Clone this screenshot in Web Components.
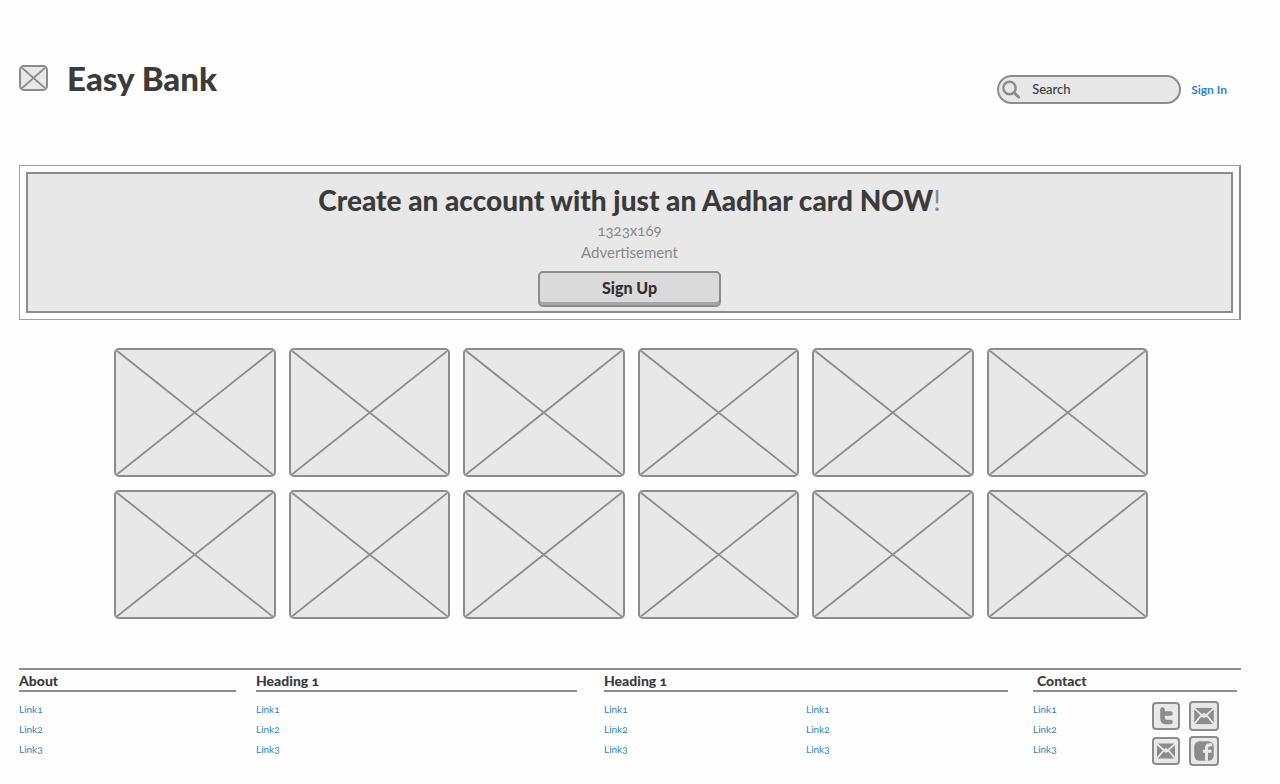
<!DOCTYPE html>
<html lang="en">
<head>
<meta charset="utf-8">
<meta name="viewport" content="width=device-width, initial-scale=1">
<title>Easy Bank</title>
<style>
  :root {
    --ink: #3b3b3b;
    --line: #8c8c8c;
    --fill: #e8e8e8;
    --muted: #8a8a8a;
    --link: #2b84c8;
  }
  * { box-sizing: border-box; }
  body {
    margin: 0;
    background: #fefefe;
    color: var(--ink);
    font-family: Lato, "Open Sans", sans-serif;
    font-variant-numeric: oldstyle-nums;
  }
</style>
</head>
<body>
<bank-page></bank-page>

<template id="bank-page">
  <style>
    :host { display: block; padding: 60px 39px 16px 19px; }
    .gallery { margin: 28px 93px 49px 95px; }
  </style>
  <site-header></site-header>
  <main>
    <promo-banner>
      <span slot="title">Create an account with just an Aadhar card NOW</span>
      <span slot="size">1323x169</span>
      <span slot="kind">Advertisement</span>
      <span slot="action">Sign Up</span>
    </promo-banner>
    <image-grid class="gallery" count="12"></image-grid>
  </main>
  <site-footer></site-footer>
</template>

<template id="image-box">
  <style>
    :host { display: block; }
    div { box-sizing: border-box; height: 100%; border: 2px solid var(--line); border-radius: 5px; background: var(--fill); overflow: hidden; }
    svg { display: block; width: 100%; height: 100%; }
    line { stroke: var(--line); stroke-width: 1.8; vector-effect: non-scaling-stroke; }
  </style>
  <div><svg viewBox="0 0 100 100" preserveAspectRatio="none" aria-hidden="true">
    <line x1="0" y1="0" x2="100" y2="100"/><line x1="100" y1="0" x2="0" y2="100"/>
  </svg></div>
</template>

<template id="site-header">
  <style>
    :host { display: block; }
    header { display: flex; align-items: flex-start; padding-right: 14px; height: 105px; box-sizing: border-box; }
    .brand { display: flex; align-items: center; gap: 19px; flex: 1; height: 36px; }
    image-box { width: 29px; height: 26px; }
    h1 { margin: 0; font-size: 33px; line-height: 36px; font-weight: 900; }
    .tools { display: flex; align-items: center; gap: 10px; padding-top: 15px; }
    a { color: var(--link); font-size: 12px; font-weight: 700; text-decoration: none; }
  </style>
  <header>
    <div class="brand"><image-box></image-box><h1>Easy Bank</h1></div>
    <div class="tools"><search-field></search-field><a href="#signin">Sign In</a></div>
  </header>
</template>

<template id="search-field">
  <style>
    :host { display: block; width: 184px; }
    label { display: flex; align-items: center; box-sizing: border-box; height: 29px; gap: 11px; padding: 0 12px 0 2px; border: 2px solid var(--line); border-radius: 15px; background: var(--fill); }
    svg { flex: none; }
    input { flex: 1; min-width: 0; padding: 0 0 2px; border: 0; outline: 0; background: none; color: var(--ink); font: inherit; font-size: 13px; font-weight: 500; }
    input::placeholder { color: var(--ink); opacity: 1; }
  </style>
  <label>
    <svg width="20" height="20" viewBox="0 0 20 20" fill="none" stroke="#8c8c8c" aria-hidden="true">
      <circle cx="8.500" cy="8" r="6.200" stroke-width="2.400"/><path d="M13 12.500 17.500 17" stroke-width="3" stroke-linecap="round"/>
    </svg>
    <input type="search" placeholder="Search" aria-label="Search">
  </label>
</template>

<template id="promo-banner">
  <style>
    :host { display: block; border: 1px solid #a0a0a0; border-right: 2px solid var(--line); padding: 6px; }
    section { display: flex; flex-direction: column; align-items: center; box-sizing: border-box; padding: 7px 16px 4px; border: 2px solid var(--line); background: var(--fill); text-align: center; }
    h2 { margin: 0; font-size: 28px; line-height: 38px; font-weight: 900; }
    i { font-style: normal; font-weight: 400; color: var(--muted); }
    p { margin: 0; font-size: 15px; line-height: 22px; color: var(--muted); }
    button { width: 183px; height: 36px; margin-top: 8px; padding: 0 0 3px; border: 2px solid var(--line); border-radius: 5px; background: #dadada; box-shadow: inset 0 -3px #a6a6a6; color: #303030; font: inherit; font-size: 16px; font-weight: 900; }
  </style>
  <section>
    <h2><slot name="title"></slot><i>!</i></h2>
    <p><slot name="size"></slot></p>
    <p><slot name="kind"></slot></p>
    <button type="button"><slot name="action"></slot></button>
  </section>
</template>

<template id="image-grid">
  <style>
    :host { display: grid; grid-template-columns: repeat(6, 1fr); gap: 13px; }
    image-box { aspect-ratio: 5 / 4; }
  </style>
</template>

<template id="site-footer">
  <style>
    :host { display: block; border-top: 2px solid var(--line); }
    footer { display: grid; grid-template-columns: 217fr 20fr 321fr 27fr 404fr 25fr 204fr 4fr; }
    footer-column:nth-child(1) { grid-column: 1; }
    footer-column:nth-child(2) { grid-column: 3; }
    footer-column:nth-child(3) { grid-column: 5; }
    footer-column:nth-child(4) { grid-column: 7; --indent: 4px; }
    .social { display: grid; grid-template-columns: 28px 30px; justify-content: end; align-items: center; gap: 5px 9px; padding: 2px 18px 0 0; }
  </style>
  <footer>
    <footer-column><span slot="heading">About</span><link-list></link-list></footer-column>
    <footer-column><span slot="heading">Heading 1</span><link-list></link-list></footer-column>
    <footer-column><span slot="heading">Heading 1</span><link-list></link-list><link-list></link-list></footer-column>
    <footer-column><span slot="heading">Contact</span><link-list></link-list>
      <div class="social">
        <social-icon kind="twitter" label="Twitter"></social-icon>
        <social-icon kind="mail" label="Email" large></social-icon>
        <social-icon kind="mail" label="Newsletter"></social-icon>
        <social-icon kind="facebook" label="Facebook" large></social-icon>
      </div>
    </footer-column>
  </footer>
</template>

<template id="footer-column">
  <style>
    :host { display: block; }
    h3 { margin: 0 0 7px; padding: 2px 0 0 var(--indent, 0); border-bottom: 2px solid var(--line); font-size: 14px; line-height: 18px; font-weight: 900; }
    .body { display: grid; grid-auto-flow: column; grid-auto-columns: 1fr; }
  </style>
  <h3><slot name="heading"></slot></h3>
  <div class="body"><slot></slot></div>
</template>

<template id="link-list">
  <style>
    :host { display: block; }
    ul { margin: 0; padding: 0; list-style: none; font-size: 10px; line-height: 20px; }
    a { color: var(--link); text-decoration: none; }
  </style>
  <ul><li><a href="#link1">Link1</a></li><li><a href="#link2">Link2</a></li><li><a href="#link3">Link3</a></li></ul>
</template>

<template id="social-icon">
  <style>
    :host { display: block; height: 28px; }
    :host([large]) { height: 30px; }
    a { display: block; box-sizing: border-box; height: 100%; border: 2px solid var(--line); border-radius: 4px; background: var(--fill); }
    svg { display: block; width: 100%; height: 100%; }
  </style>
  <a href="#social"><svg viewBox="0 0 24 24" aria-hidden="true"></svg></a>
</template>

<script>
  class TemplateElement extends HTMLElement {
    constructor() {
      super();
      const template = document.getElementById(this.localName);
      this.attachShadow({ mode: "open" }).append(template.content.cloneNode(true));
    }
  }

  const glyphs = {
    twitter: '<path d="M8.500 5.500V14Q8.500 18 12.500 18H16.500M8.500 9.500H16.500" fill="none" stroke="#8c8c8c" stroke-width="4.600" stroke-linecap="round"/>',
    mail: '<path d="M3 4.500H21V19.500H3Z" fill="#8c8c8c"/><path d="M2.500 4.500 12 13 21.500 4.500M2.500 20 9.500 11.500M21.500 20 14.500 11.500M9.500 12.500 12 10 14.500 12.500" fill="none" stroke="#e8e8e8" stroke-width="1.700"/>',
    facebook: '<rect x="3" y="3" width="18" height="18" rx="5" fill="#8c8c8c"/><path d="M14.300 21V9.500Q14.300 6.300 17.500 6.300H19.500M11 12.300H19" fill="none" stroke="#e8e8e8" stroke-width="2.800"/>'
  };

  class SocialIcon extends TemplateElement {
    connectedCallback() {
      this.shadowRoot.querySelector("svg").innerHTML = glyphs[this.getAttribute("kind")];
      this.shadowRoot.querySelector("a").setAttribute("aria-label", this.getAttribute("label"));
    }
  }

  class ImageGrid extends TemplateElement {
    connectedCallback() {
      const count = Number(this.getAttribute("count"));
      for (let i = 0; i < count; i++) this.shadowRoot.append(document.createElement("image-box"));
    }
  }

  customElements.define("social-icon", SocialIcon);
  customElements.define("image-grid", ImageGrid);
  for (const name of ["image-box", "search-field", "link-list", "footer-column", "site-header", "promo-banner", "site-footer", "bank-page"]) {
    customElements.define(name, class extends TemplateElement {});
  }
</script>
</body>
</html>
